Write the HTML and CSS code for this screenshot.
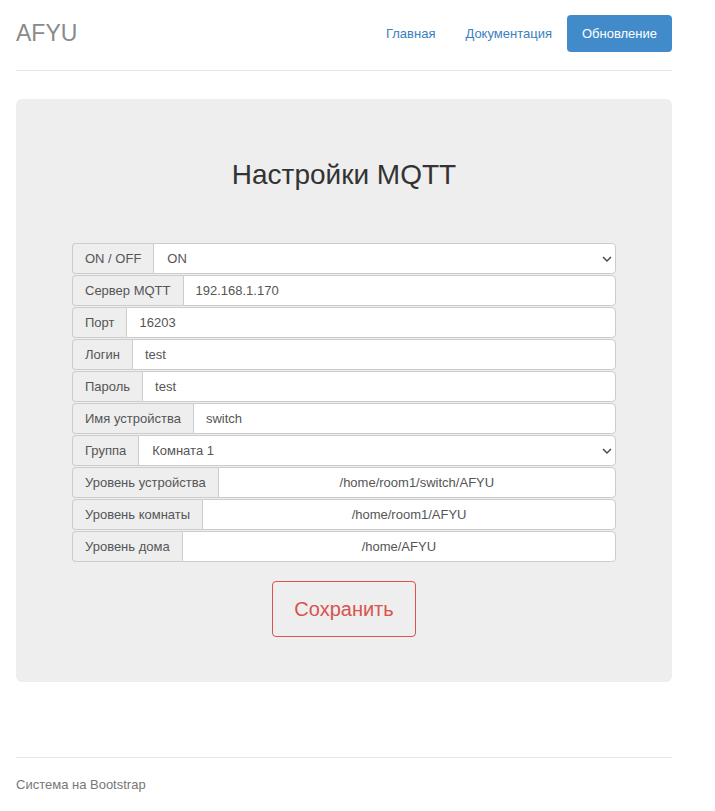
FILE: index.html
```html
<!DOCTYPE html>
<html lang="ru">
<head>
<meta charset="utf-8">
<title>AFYU</title>
<link rel="stylesheet" href="styles.css">
</head>
<body>
<div class="container">
  <header class="header">
    <div class="brand">AFYU</div>
    <nav class="nav">
      <a class="pill" href="#">Главная</a>
      <a class="pill" href="#">Документация</a>
      <a class="pill active" href="#">Обновление</a>
    </nav>
  </header>

  <main class="jumbotron">
    <h1 class="title">Настройки MQTT</h1>
    <form class="form">
      <div class="group">
        <span class="addon">ON / OFF</span>
        <div class="select-wrap">
          <select class="control select"><option>ON</option><option>OFF</option></select>
          <svg class="chev" width="10" height="6" viewBox="0 0 10 6"><path d="M1 1l4 4 4-4" fill="none" stroke="#444" stroke-width="1.4"/></svg>
        </div>
      </div>
      <div class="group">
        <span class="addon">Сервер MQTT</span>
        <input class="control" value="192.168.1.170">
      </div>
      <div class="group">
        <span class="addon">Порт</span>
        <input class="control" value="16203">
      </div>
      <div class="group">
        <span class="addon">Логин</span>
        <input class="control" value="test">
      </div>
      <div class="group">
        <span class="addon">Пароль</span>
        <input class="control" value="test">
      </div>
      <div class="group">
        <span class="addon">Имя устройства</span>
        <input class="control" value="switch">
      </div>
      <div class="group">
        <span class="addon">Группа</span>
        <div class="select-wrap">
          <select class="control select"><option>Комната 1</option></select>
          <svg class="chev" width="10" height="6" viewBox="0 0 10 6"><path d="M1 1l4 4 4-4" fill="none" stroke="#444" stroke-width="1.4"/></svg>
        </div>
      </div>
      <div class="group">
        <span class="addon">Уровень устройства</span>
        <input class="control center" value="/home/room1/switch/AFYU">
      </div>
      <div class="group">
        <span class="addon">Уровень комнаты</span>
        <input class="control center" value="/home/room1/AFYU">
      </div>
      <div class="group">
        <span class="addon">Уровень дома</span>
        <input class="control center" value="/home/AFYU">
      </div>
      <div class="actions">
        <button class="btn-save" type="button">Сохранить</button>
      </div>
    </form>
  </main>

  <footer class="footer">Система на Bootstrap</footer>
</div>
</body>
</html>
```
FILE: styles.css
```css
* { box-sizing: border-box; }
html, body { margin: 0; padding: 0; background: #fff; }
body {
  font-family: "Liberation Sans", Arial, sans-serif;
  font-size: 13px;
  color: #333;
}
.container {
  width: 656px;
  margin-left: 16px;
  padding-top: 15px;
}
.header {
  display: flex;
  justify-content: space-between;
  align-items: flex-start;
  height: 56px;
  padding-bottom: 18px;
  border-bottom: 1px solid #e5e5e5;
}
.brand {
  font-size: 23px;
  color: #8a8a8a;
  line-height: 37px;
}
.nav { display: flex; align-items: center; }
.pill {
  display: block;
  padding: 9px 15px;
  line-height: 19px;
  font-size: 13px;
  color: #3a7fc0;
  text-decoration: none;
  border-radius: 4px;
}
.pill.active {
  background: #428bca;
  color: #fff;
}
.jumbotron {
  margin-top: 28px;
  background: #eee;
  border-radius: 6px;
  padding: 60px 56px 45px;
}
.title {
  margin: 0 0 52px;
  text-align: center;
  font-size: 28px;
  font-weight: 400;
  line-height: 32px;
  color: #333;
}
.form { display: flex; flex-direction: column; }
.group {
  display: flex;
  height: 31px;
  margin-bottom: 1px;
}
.addon {
  display: flex;
  align-items: center;
  padding: 0 12px;
  background: #eee;
  border: 1px solid #ccc;
  border-right: 0;
  border-radius: 4px 0 0 4px;
  color: #555;
  white-space: nowrap;
  font-size: 13px;
}
.control {
  flex: 1;
  min-width: 0;
  height: 31px;
  border: 1px solid #ccc;
  border-radius: 0 4px 4px 0;
  background: #fff;
  padding: 0 12px;
  font-family: inherit;
  font-size: 13px;
  color: #555;
  outline: none;
}
.control.center { text-align: center; }
.select-wrap { flex: 1; position: relative; display: flex; }
.select {
  appearance: none;
  -webkit-appearance: none;
  padding-left: 13px;
  width: 100%;
}
.chev {
  position: absolute;
  right: 4px;
  top: 13px;
  pointer-events: none;
}
.actions {
  display: flex;
  justify-content: center;
  margin-top: 18px;
}
.btn-save {
  width: 144px;
  height: 56px;
  background: transparent;
  border: 1px solid #d9534f;
  border-radius: 4px;
  color: #d9534f;
  font-family: inherit;
  font-size: 20px;
  cursor: pointer;
}
.footer {
  margin-top: 75px;
  border-top: 1px solid #e5e5e5;
  padding-top: 18px;
  font-size: 13px;
  line-height: 18px;
  color: #777;
}
```
